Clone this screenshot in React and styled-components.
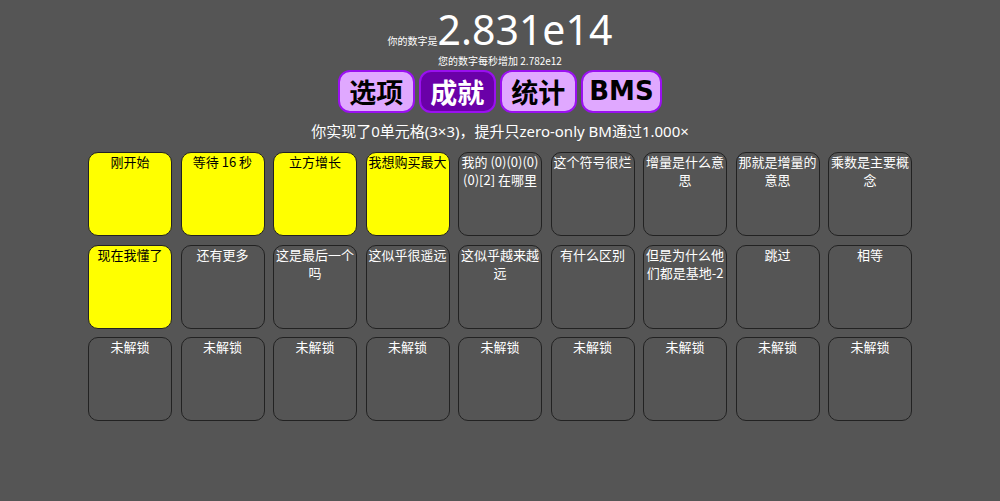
import React from "react";
import styled, { createGlobalStyle } from "styled-components";

const Global = createGlobalStyle`
  html, body { margin: 0; padding: 0; background: #555555; }
  body { font-family: "Noto Sans", "Noto Sans CJK SC", sans-serif; color: #fff; }
`;

const Page = styled.div`
  display: flex;
  flex-direction: column;
  align-items: center;
  padding-top: 5px;
`;

const NumberLine = styled.div`
  display: flex;
  align-items: baseline;
  height: 48px;
`;

const Small = styled.span`
  display: inline-block;
  font-size: 10px;
  line-height: 12px;
  font-family: "Noto Sans CJK SC", sans-serif;
`;

const Big = styled.span`
  display: inline-block;
  font-size: 41px;
  line-height: 48px;
  font-family: "Noto Sans", "Noto Sans CJK SC", sans-serif;
`;

const Rate = styled.div`
  margin-top: 2px;
  font-size: 10px;
  font-family: "Noto Sans CJK SC", sans-serif;
  line-height: 12px;
`;

const Tabs = styled.div`
  display: flex;
  gap: 4px;
  margin-top: 3px;
`;

const Tab = styled.button`
  height: 43px;
  padding: 0 ${(p) => (p.$latin ? "6.5px" : "9.5px")};
  border: 2px solid #9a10f0;
  border-radius: 12px;
  background: ${(p) => (p.$active ? "#6a00a8" : "#e0a8ff")};
  color: ${(p) => (p.$active ? "#fff" : "#000")};
  font-family: ${(p) => (p.$latin ? '"DejaVu Sans", sans-serif' : '"Noto Sans CJK SC", sans-serif')};
  font-weight: bold;
  font-size: ${(p) => (p.$latin ? "26px" : "27px")};
  line-height: 39px;
  cursor: pointer;
`;

const Info = styled.div`
  margin-top: 5px;
  font-size: 15px;
  line-height: 26px;
  font-family: "Noto Sans", "Noto Sans CJK SC", sans-serif;
`;

const Grid = styled.div`
  display: grid;
  grid-template-columns: repeat(9, 84px);
  gap: 8.5px 8.5px;
  margin-top: 8px;
`;

const Cell = styled.div`
  box-sizing: border-box;
  width: 84px;
  height: 84px;
  border: 1.5px solid #222;
  border-radius: 10px;
  background: ${(p) => (p.$done ? "#ffff00" : "#555555")};
  color: ${(p) => (p.$done ? "#000" : "#ffffff")};
  font-family: "Noto Sans CJK SC", sans-serif;
  font-size: 13px;
  line-height: 18px;
  text-align: center;
  padding: 0 1px;
  word-break: break-all;
`;

const cells = [
  ["刚开始", 1],
  ["等待 16 秒", 1],
  ["立方增长", 1],
  ["我想购买最大", 1],
  ["我的 (0)(0)(0)(0)[2] 在哪里", 0],
  ["这个符号很烂", 0],
  ["增量是什么意思", 0],
  ["那就是增量的意思", 0],
  ["乘数是主要概念", 0],
  ["现在我懂了", 1],
  ["还有更多", 0],
  ["这是最后一个吗", 0],
  ["这似乎很遥远", 0],
  ["这似乎越来越远", 0],
  ["有什么区别", 0],
  ["但是为什么他们都是基地-2", 0],
  ["跳过", 0],
  ["相等", 0],
  ...Array(9).fill(["未解锁", 0]),
];

export default function App() {
  return (
    <>
      <Global />
      <Page>
        <NumberLine>
          <Small>你的数字是</Small>
          <Big>2.831e14</Big>
        </NumberLine>
        <Rate>您的数字每秒增加 2.782e12</Rate>
        <Tabs>
          <Tab>选项</Tab>
          <Tab $active>成就</Tab>
          <Tab>统计</Tab>
          <Tab $latin>BMS</Tab>
        </Tabs>
        <Info>你实现了0单元格(3×3)，提升只zero-only BM通过1.000×</Info>
        <Grid>
          {cells.map(([t, d], i) => (
            <Cell key={i} $done={!!d}>
              {t}
            </Cell>
          ))}
        </Grid>
      </Page>
    </>
  );
}
